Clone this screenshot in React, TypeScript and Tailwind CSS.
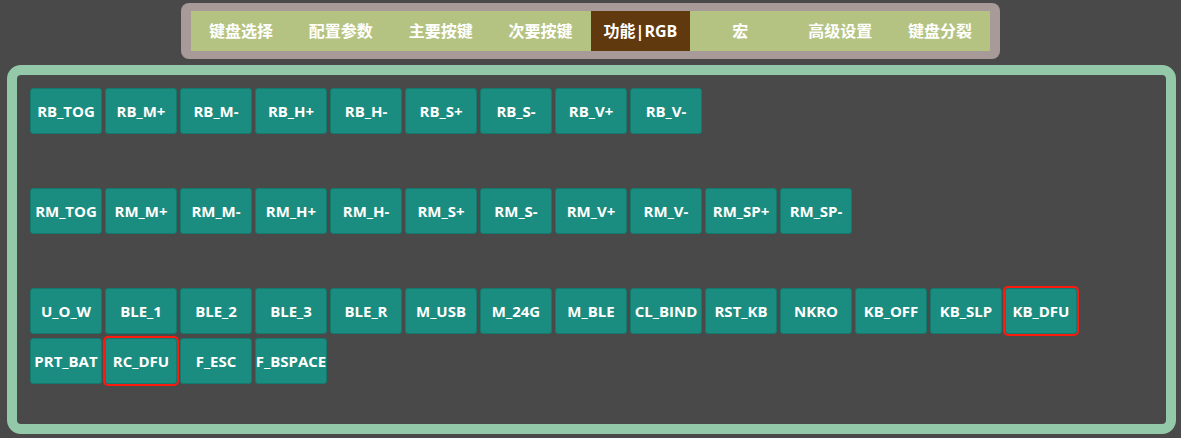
import React from "react";

const tabs = ["键盘选择", "配置参数", "主要按键", "次要按键", "功能|RGB", "宏", "高级设置", "键盘分裂"];

const groups: string[][] = [
  ["RB_TOG", "RB_M+", "RB_M-", "RB_H+", "RB_H-", "RB_S+", "RB_S-", "RB_V+", "RB_V-"],
  ["RM_TOG", "RM_M+", "RM_M-", "RM_H+", "RM_H-", "RM_S+", "RM_S-", "RM_V+", "RM_V-", "RM_SP+", "RM_SP-"],
  [
    "U_O_W", "BLE_1", "BLE_2", "BLE_3", "BLE_R", "M_USB", "M_24G", "M_BLE", "CL_BIND", "RST_KB", "NKRO",
    "KB_OFF", "KB_SLP", "KB_DFU", "PRT_BAT", "RC_DFU", "F_ESC", "F_BSPACE",
  ],
];

const marked = new Set(["KB_DFU", "RC_DFU"]);

export default function App() {
  return (
    <div className="min-h-screen bg-[#494949] pt-[3px] font-['Open_Sans','Noto_Sans_CJK_SC',sans-serif]">
      {/* top tabs */}
      <div className="mx-auto w-[819px] rounded-lg bg-[#a99a9a] px-[10px] py-[8px]">
        <div className="flex h-[40px] bg-[#b5c382]">
          {tabs.map((t, i) => (
            <div
              key={t}
              className={
                "flex w-[100px] items-center justify-center text-[16px] font-bold text-white " +
                (i === 4 ? "bg-[#61390f]" : "")
              }
            >
              {t}
            </div>
          ))}
        </div>
      </div>

      {/* key panel */}
      <div className="ml-[7px] mr-[5px] mt-[6px] rounded-[14px] border-[10px] border-[#93c9a8] pb-[40px] pl-[13px] pr-[60px] pt-[13px]">
        {groups.map((g, gi) => (
          <div key={gi} className={"flex flex-wrap gap-x-[3px] gap-y-[4px] " + (gi < groups.length - 1 ? "mb-[54px]" : "")}>
            {g.map((k) => (
              <div
                key={k}
                className={
                  "flex h-[46px] w-[72px] items-center justify-center whitespace-nowrap rounded-[3px] border border-[#137a6d] bg-[#1a8c80] text-[15px] font-bold text-white " +
                  (marked.has(k) ? "outline-2 outline-[#ff1a10]" : "")
                }
              >
                {k}
              </div>
            ))}
          </div>
        ))}
      </div>
    </div>
  );
}
